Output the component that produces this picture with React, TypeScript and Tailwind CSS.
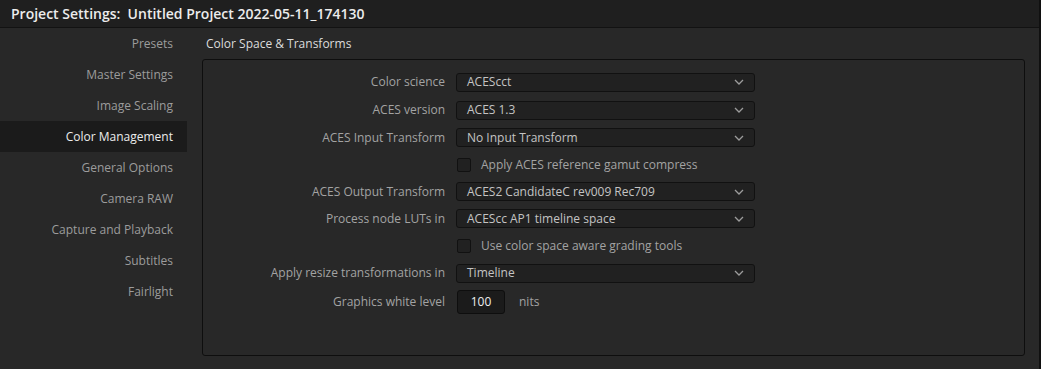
const navItems = [
  "Presets",
  "Master Settings",
  "Image Scaling",
  "Color Management",
  "General Options",
  "Camera RAW",
  "Capture and Playback",
  "Subtitles",
  "Fairlight",
];

type Row =
  | { kind: "select"; label: string; value: string; h: string }
  | { kind: "check"; text: string; h: string }
  | { kind: "number"; label: string; value: string; unit: string; h: string };

const rows: Row[] = [
  { kind: "select", label: "Color science", value: "ACEScct", h: "h-[28px]" },
  { kind: "select", label: "ACES version", value: "ACES 1.3", h: "h-[28px]" },
  { kind: "select", label: "ACES Input Transform", value: "No Input Transform", h: "h-[27px]" },
  { kind: "check", text: "Apply ACES reference gamut compress", h: "h-[27px]" },
  { kind: "select", label: "ACES Output Transform", value: "ACES2 CandidateC rev009 Rec709", h: "h-[27px]" },
  { kind: "select", label: "Process node LUTs in", value: "ACEScc AP1 timeline space", h: "h-[27px]" },
  { kind: "check", text: "Use color space aware grading tools", h: "h-[27px]" },
  { kind: "select", label: "Apply resize transformations in", value: "Timeline", h: "h-[28px]" },
  { kind: "number", label: "Graphics white level", value: "100", unit: "nits", h: "h-[30px]" },
];

function Chevron() {
  return (
    <svg width="10" height="6" viewBox="0 0 10 6" className="flex-shrink-0">
      <path d="M1 1 L5 5 L9 1" fill="none" stroke="#9c9c9c" strokeWidth="1.3" />
    </svg>
  );
}

function Label({ text }: { text: string }) {
  return <div className="w-[253px] flex-shrink-0 pr-[11px] text-right text-[#a3a3a3] whitespace-nowrap">{text}</div>;
}

export default function App() {
  return (
    <div
      className="w-[1041px] h-[369px] flex flex-col bg-[#282828] border-r-2 border-[#101010] overflow-hidden text-[12px] leading-none"
      style={{ fontFamily: '"Open Sans", "Noto Sans", sans-serif' }}
    >
      {/* Title bar */}
      <div className="h-[28px] flex items-center pl-[11px] bg-[#1f1f1f] border-b border-[#121212] flex-shrink-0">
        <span className="text-[#ececec] font-semibold text-[14px]">
          Project Settings:&nbsp; Untitled Project 2022-05-11_174130
        </span>
      </div>

      <div className="flex flex-1">
        {/* Sidebar */}
        <div className="w-[187px] flex flex-col flex-shrink-0">
          {navItems.map((item) => (
            <div
              key={item}
              className={`h-[31px] flex items-center justify-end pr-[14px] ${
                item === "Color Management" ? "bg-[#1b1b1b] text-[#ececec]" : "text-[#9c9c9c]"
              }`}
            >
              {item}
            </div>
          ))}
        </div>

        {/* Content */}
        <div className="flex-1 flex flex-col pl-[15px] pr-[14px]">
          <div className="h-[31px] flex items-center pl-[4px] text-[#dcdcdc]">Color Space &amp; Transforms</div>

          <div className="h-[297px] border border-[#0e0e0e] rounded-[3px] pt-[8px]">
            {rows.map((row, i) => (
              <div key={i} className={`${row.h} flex items-center`}>
                {row.kind === "select" && (
                  <>
                    <Label text={row.label} />
                    <div className="w-[299px] h-[19px] flex items-center justify-between pl-[10px] pr-[10px] bg-[#212121] border border-[#111111] rounded-[3px] text-[#c4c4c4]">
                      <span>{row.value}</span>
                      <Chevron />
                    </div>
                  </>
                )}
                {row.kind === "check" && (
                  <>
                    <div className="w-[254px] flex-shrink-0" />
                    <div className="w-[14px] h-[14px] bg-[#212121] border border-[#111111] rounded-[2px]" />
                    <span className="ml-[10px] text-[#a3a3a3]">{row.text}</span>
                  </>
                )}
                {row.kind === "number" && (
                  <>
                    <div className="w-[254px] flex-shrink-0 pr-[12px] text-right text-[#a3a3a3] whitespace-nowrap">{row.label}</div>
                    <div className="w-[48px] h-[24px] flex items-center justify-center bg-[#1b1b1b] border border-[#0e0e0e] rounded-[3px] text-[#ededed]">
                      {row.value}
                    </div>
                    <span className="ml-[14px] text-[#a3a3a3]">{row.unit}</span>
                  </>
                )}
              </div>
            ))}
          </div>
        </div>
      </div>
    </div>
  );
}
